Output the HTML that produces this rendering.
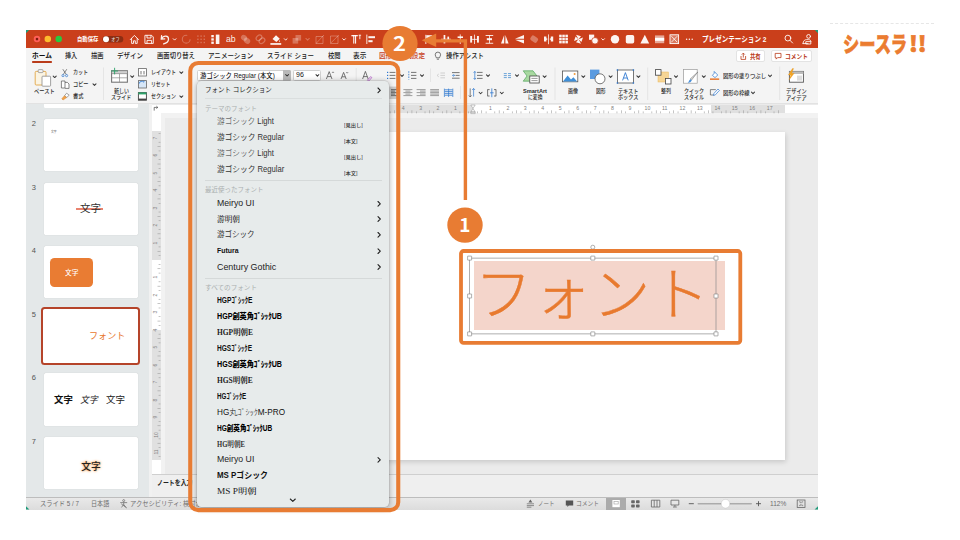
<!DOCTYPE html>
<html lang="ja"><head><meta charset="utf-8"><title>フォント</title>
<style>
html,body{margin:0;padding:0;background:#fff;}
body{width:960px;height:540px;position:relative;overflow:hidden;font-family:"Liberation Sans","Noto Sans CJK JP",sans-serif;}
.a{position:absolute;}
.t{position:absolute;white-space:nowrap;transform-origin:0 50%;}
svg{position:absolute;left:0;top:0;overflow:visible;}
</style></head><body>
<div class="a" style="left:26.00px;top:30.00px;width:792.00px;height:479.60px;background:#EDEDED;"></div>
<div class="a" style="left:26.00px;top:30.00px;width:792.00px;height:17.60px;background:#CA3F1B;"></div>
<div class="a" style="left:26.00px;top:47.60px;width:792.00px;height:56.60px;background:#F4F4F4;border-bottom:1px solid #E2E2E2;box-sizing:border-box;"></div>
<div class="a" style="left:26.00px;top:104.20px;width:123.30px;height:393.00px;background:#E4E8E9;"></div>
<div class="a" style="left:149.30px;top:104.20px;width:2.70px;height:393.00px;background:#F1F1F1;"></div>
<div class="a" style="left:152.00px;top:104.20px;width:666.00px;height:369.80px;background:#EBEBEB;"></div>
<div class="a" style="left:160.50px;top:113.30px;width:657.50px;height:4.70px;background:#F2F2F2;"></div>
<div class="a" style="left:160.50px;top:113.30px;width:4.10px;height:360.70px;background:#F2F2F2;"></div>
<div class="a" style="left:200.00px;top:131.60px;width:585.00px;height:328.40px;background:#fff;box-shadow:1px 2px 5px rgba(0,0,0,.15);"></div>
<div class="a" style="left:152.00px;top:104.60px;width:666.00px;height:8.70px;background:#fff;"></div>
<div class="a" style="left:200.00px;top:104.60px;width:273.00px;height:8.70px;background:#E0E0E0;"></div>
<div class="a" style="left:710.50px;top:104.60px;width:74.50px;height:8.70px;background:#E0E0E0;"></div>
<div class="a" style="left:152.00px;top:104.60px;width:8.50px;height:369.40px;background:#fff;"></div>
<div class="a" style="left:152.00px;top:131.00px;width:8.50px;height:129.00px;background:#E0E0E0;"></div>
<div class="a" style="left:152.00px;top:330.00px;width:8.50px;height:130.00px;background:#E0E0E0;"></div>
<div class="a" style="left:152.00px;top:474.00px;width:666.00px;height:23.20px;background:#EFEFEF;border-top:0.7px solid #CFCFCF;box-sizing:border-box;"></div>
<div class="a" style="left:26.00px;top:497.20px;width:792.00px;height:12.40px;background:linear-gradient(#E9E9E9,#DCDCDC);border-top:0.7px solid #BDBDBD;box-sizing:border-box;"></div>
<div class="a" style="left:606.00px;top:498.00px;width:19.60px;height:11.60px;background:#ABABAB;"></div>
<div class="a" style="left:43.80px;top:104.20px;width:94.50px;height:3.40px;background:#fff;border-radius:0 0 1.5px 1.5px;"></div>
<div class="a" style="left:43.80px;top:118.75px;width:94.50px;height:52.70px;background:#fff;border-radius:1.5px;box-shadow:0 0 0.8px rgba(0,0,0,.25);"></div>
<div class="a" style="left:43.80px;top:182.50px;width:94.50px;height:52.70px;background:#fff;border-radius:1.5px;box-shadow:0 0 0.8px rgba(0,0,0,.25);"></div>
<div class="a" style="left:43.80px;top:245.60px;width:94.50px;height:52.70px;background:#fff;border-radius:1.5px;box-shadow:0 0 0.8px rgba(0,0,0,.25);"></div>
<div class="a" style="left:41.30px;top:307.40px;width:99.00px;height:57.20px;background:#fff;border:2.1px solid #B5442A;border-radius:3.5px;box-sizing:border-box;"></div>
<div class="a" style="left:43.80px;top:373.00px;width:94.50px;height:52.70px;background:#fff;border-radius:1.5px;box-shadow:0 0 0.8px rgba(0,0,0,.25);"></div>
<div class="a" style="left:43.80px;top:436.80px;width:94.50px;height:52.70px;background:#fff;border-radius:1.5px;box-shadow:0 0 0.8px rgba(0,0,0,.25);"></div>
<div class="a" style="left:76.00px;top:208.30px;width:26.60px;height:1.70px;background:#E9836F;"></div>
<div class="a" style="left:50.00px;top:258.00px;width:43.00px;height:29.00px;background:#E97C33;border-radius:4.5px;"></div>
<div class="a" style="left:32.00px;top:61.40px;width:20.20px;height:1.60px;background:#B93B1A;border-radius:0.8px;"></div>
<div class="a" style="left:735.50px;top:50.40px;width:29.00px;height:12.00px;background:#fff;border:0.6px solid #E3E3E3;border-radius:2px;box-sizing:border-box;"></div>
<div class="a" style="left:770.70px;top:50.40px;width:41.80px;height:12.00px;background:#fff;border:0.6px solid #E3E3E3;border-radius:2px;box-sizing:border-box;"></div>
<div class="a" style="left:196.50px;top:69.60px;width:94.50px;height:11.20px;background:#fff;border:0.5px solid #D0D0D0;border-radius:1.5px;box-sizing:border-box;"></div>
<div class="a" style="left:283.30px;top:69.60px;width:7.70px;height:11.20px;background:#B9B9B9;border-radius:0 1.5px 1.5px 0;"></div>
<div class="a" style="left:292.80px;top:69.60px;width:28.20px;height:11.20px;background:#fff;border:0.5px solid #D0D0D0;border-radius:1.5px;box-sizing:border-box;"></div>
<div class="a" style="left:474.00px;top:261.00px;width:251.00px;height:69.30px;background:#F4D5CB;"></div>
<svg width="960" height="540" viewBox="0 0 960 540"><path d="M26 30 h3.2 l-3.2 3.2z M818 30 h-3.2 l3.2 3.2z M26 509.6 h3.4 l-3.4 -3.4z M818 509.6 h-3.4 l3.4 -3.4z" fill="#1F9C7A"/><circle cx="37" cy="39.1" r="3.25" fill="#FF5F57"/><circle cx="37" cy="39.1" r="1.3" fill="#7E1B10"/><circle cx="47.8" cy="39.1" r="3.25" fill="#FEBC2E"/><circle cx="58.7" cy="39.1" r="3.25" fill="#28C840"/><rect x="102.5" y="35.9" width="20.8" height="6.6" rx="3.3" fill="#8C2D13"/><circle cx="106" cy="39.2" r="3" fill="#fff"/><g fill="none" stroke="rgba(255,255,255,.93)" stroke-width="0.95" stroke-linecap="round" stroke-linejoin="round"><path d="M130.3 39.6 L134.4 35.4 L138.5 39.6 M131.6 38.6 V43.4 H133.5 V40.8 H135.3 V43.4 H137.2 V38.6"/><path d="M145.3 35.3 H151.6 L153.3 37 V43.4 H145.3 Z M147 35.5 V38 H151 V35.5 M147 43.2 V40.4 H151.6 V43.2"/><path d="M161.6 35.6 L161.2 39.2 L164.8 38.8 M161.6 38.8 C163.4 35 168.8 35.4 168.5 39.4 C168.3 42 166 43.4 163.6 43.9" stroke-width="1.25"/><path d="M173.2 38.7 l1.4 1.4 l1.4 -1.4"/><path d="M284.3 38.7 l1.4 1.4 l1.4 -1.4"/><path d="M342.7 38.7 l1.4 1.4 l1.4 -1.4"/><path d="M601.7 38.7 l1.4 1.4 l1.4 -1.4"/><circle cx="787.9" cy="38.1" r="2.9"/><path d="M790 40.3 L792.6 43"/><circle cx="808.6" cy="36.4" r="1.9"/><path d="M803 43.6 C803 40.6 805 39.6 806.6 39.6 H808.4 C810 39.6 811 40.4 811 41.6 M803 43.6 H808 M806.2 41.6 h4.6 v2.4 h-4.6z" stroke-width="0.9"/></g><circle cx="186.2" cy="39.2" r="3.9" fill="none" stroke="rgba(255,255,255,.27)" stroke-width="1.1" stroke-dasharray="19 5"/><rect x="197.2" y="35.4" width="1.4" height="1.4" fill="rgba(255,255,255,.27)"/><rect x="197.2" y="38.6" width="1.4" height="1.4" fill="rgba(255,255,255,.27)"/><rect x="197.2" y="41.8" width="1.4" height="1.4" fill="rgba(255,255,255,.27)"/><rect x="200.4" y="35.4" width="1.4" height="1.4" fill="rgba(255,255,255,.27)"/><rect x="200.4" y="38.6" width="1.4" height="1.4" fill="rgba(255,255,255,.27)"/><rect x="200.4" y="41.8" width="1.4" height="1.4" fill="rgba(255,255,255,.27)"/><rect x="203.6" y="35.4" width="1.4" height="1.4" fill="rgba(255,255,255,.27)"/><rect x="203.6" y="38.6" width="1.4" height="1.4" fill="rgba(255,255,255,.27)"/><rect x="203.6" y="41.8" width="1.4" height="1.4" fill="rgba(255,255,255,.27)"/><ellipse cx="244" cy="37.8" rx="3.2" ry="2.7" fill="rgba(255,255,255,.27)" transform="rotate(35 244 37.8)"/><ellipse cx="247" cy="40.8" rx="3.4" ry="2.8" fill="rgba(255,255,255,.27)" transform="rotate(35 247 40.8)"/><ellipse cx="259" cy="37.8" rx="3.2" ry="2.3" fill="none" stroke="rgba(255,255,255,.27)" stroke-width="1.2" transform="rotate(-40 259 37.8)"/><ellipse cx="262" cy="40.8" rx="3.2" ry="2.3" fill="none" stroke="rgba(255,255,255,.27)" stroke-width="1.2" transform="rotate(-40 262 40.8)"/><rect x="295.5" y="35" width="5.6" height="5.6" fill="rgba(255,255,255,.27)"/><rect x="292.6" y="38" width="5.6" height="5.6" fill="rgba(255,255,255,.27)"/><path d="M305.90 38.45 l1.70 1.70 l1.70 -1.70" fill="none" stroke="rgba(255,255,255,.27)" stroke-width="1.05" stroke-linecap="round" stroke-linejoin="round"/><path d="M316 36.5 H323 V43.5 H316 Z M316 43.5 L324 35" fill="none" stroke="rgba(255,255,255,.27)" stroke-width="1"/><path d="M330.5 36 H338 V43.5 H330.5 Z M331 42.8 L339 35" fill="none" stroke="rgba(255,255,255,.27)" stroke-width="1"/><rect x="530.4" y="36.4" width="7.6" height="5.4" rx="1.8" fill="rgba(255,255,255,.32)" transform="rotate(35 534.2 39.1)"/><g fill="rgba(255,255,255,.94)"><rect x="215.8" y="34.6" width="3.6" height="9.4"/><rect x="211.3" y="35" width="2.5" height="2.3"/><rect x="211.3" y="38.3" width="2.5" height="2.3"/><rect x="211.3" y="41.6" width="2.5" height="2.3"/><path d="M272.5 39 L276 35.2 L279.8 38.8 L276.4 42 Z M279.6 40 q1 1.6 0 2.3 q-1 -0.7 0 -2.3z"/><rect x="270.4" y="43.1" width="10.8" height="1.7"/><rect x="351.4" y="35" width="6.4" height="1.3"/><rect x="353.2" y="35" width="1.1" height="8.6"/><rect x="355" y="35" width="1.1" height="8.6"/><rect x="359.4" y="34.8" width="0.9" height="4.4"/><rect x="358.6" y="34.8" width="2.5" height="0.8"/><rect x="366.4" y="34.6" width="0.9" height="9.4"/><rect x="368.4" y="36.2" width="6.6" height="2"/><rect x="368.4" y="40.2" width="4.2" height="2"/><rect x="425.4" y="34.8" width="0.9" height="9.2"/><rect x="426.3" y="35.2" width="6" height="4.4"/><rect x="441" y="38.8" width="10" height="0.8"/><rect x="443.6" y="35" width="1.7" height="8.4"/><rect x="447.4" y="36.6" width="1.7" height="5.4"/><rect x="459.8" y="34.4" width="0.8" height="9.6"/><rect x="457.6" y="36.4" width="5.4" height="1.6"/><rect x="458.4" y="40.2" width="3.8" height="1.6"/><rect x="470.2" y="36" width="1.9" height="6.6"/><rect x="474.2" y="34.6" width="0.8" height="9.4"/><rect x="477" y="36" width="1.9" height="6.6"/><rect x="472" y="38.9" width="5" height="0.8"/><rect x="485.6" y="35" width="7.6" height="0.9"/><rect x="485.6" y="42.8" width="7.6" height="0.9"/><rect x="486.8" y="38.2" width="5.2" height="2"/><rect x="489" y="35.5" width="0.8" height="7.6"/><path d="M504.2 35 L501 43.6 H504.2 Z M505.4 35 L508.6 43.6 H505.4 Z"/><path d="M515 38.8 L524 35 V38.8 Z M515 39.8 L524 43.4 V39.8 Z" /><rect x="548.2" y="34.4" width="0.8" height="9.8"/><path d="M544 36.6 h2.4 v1.6 l1.4 0.9 -1.4 0.9 v1.6 h-2.4z M553.2 36.6 h-2.4 v1.6 l-1.4 0.9 1.4 0.9 v1.6 h2.4z"/><rect x="559.20" y="34.70" width="2.5" height="2.5"/><rect x="559.20" y="37.80" width="2.5" height="2.5"/><rect x="559.20" y="40.90" width="2.5" height="2.5"/><rect x="562.30" y="34.70" width="2.5" height="2.5"/><rect x="562.30" y="37.80" width="2.5" height="2.5"/><rect x="562.30" y="40.90" width="2.5" height="2.5"/><rect x="565.40" y="34.70" width="2.5" height="2.5"/><rect x="565.40" y="37.80" width="2.5" height="2.5"/><rect x="565.40" y="40.90" width="2.5" height="2.5"/><path d="M578.5 39.2 L576 34.8 L581 36.2 Z M578.5 39.2 L583 37.4 L581.4 42 Z M578.5 39.2 L581 43.8 L576 42.2 Z M578.5 39.2 L574 41 L575.6 36.4 Z"/><rect x="589" y="34.6" width="5.2" height="5.2"/><circle cx="595" cy="40.8" r="3.3" stroke="#CA3F1B" stroke-width="0.8"/><circle cx="615" cy="39.2" r="4.2"/><rect x="625.8" y="35" width="8.4" height="8.4" rx="1.7"/><path d="M644.8 34.8 L649.2 43.5 H640.4 Z"/><circle cx="686.6" cy="39.3" r="0.75"/><circle cx="689.4" cy="39.3" r="0.75"/><circle cx="692.2" cy="39.3" r="0.75"/></g><rect x="655" y="35.4" width="9.2" height="7.8" fill="rgba(255,255,255,.55)"/><rect x="655" y="37.8" width="9.2" height="3" fill="#fff"/><rect x="670" y="34.8" width="8.6" height="8.8" fill="rgba(255,255,255,.3)" stroke="#fff" stroke-width="0.9"/><path d="M671.4 36.2 L677.2 42.2 M677.2 36.2 L671.4 42.2" stroke="#fff" stroke-width="0.8"/><path d="M435.2 54.8 a2.7 2.7 0 1 1 5.4 0 c0 1.3 -1 1.7 -1.1 3 h-3.2 c-0.1 -1.3 -1.1 -1.7 -1.1 -3z M436.8 59.2 h2.2" fill="none" stroke="#444" stroke-width="0.7"/><path d="M741 56 v3.4 h4.6 v-3.4 M743.3 57.6 v-4.4 M741.8 54.6 l1.5 -1.5 l1.5 1.5" fill="none" stroke="#B93B1A" stroke-width="0.8"/><path d="M775.2 53.4 h5.8 v4.2 h-3.4 l-1.4 1.5 v-1.5 h-1z" fill="none" stroke="#B93B1A" stroke-width="0.8" stroke-linejoin="round"/><rect x="35.2" y="71.4" width="10.8" height="13.6" rx="1" fill="#FBF4E3" stroke="#E2A646" stroke-width="0.9"/><rect x="38.2" y="69.6" width="4.8" height="3" rx="0.8" fill="#F4F4F4" stroke="#8A8A8A" stroke-width="0.7"/><rect x="42" y="76.2" width="8.6" height="10" rx="0.8" fill="#fff" stroke="#8A8A8A" stroke-width="0.8"/><path d="M53.20 76.05 l1.50 1.50 l1.50 -1.50" fill="none" stroke="#3a3a3a" stroke-width="1.05" stroke-linecap="round" stroke-linejoin="round"/><path d="M62.8 69.2 L66.4 74.6 M66.8 69.2 L63.2 74.6" stroke="#555" stroke-width="0.7" fill="none"/><circle cx="63" cy="75.6" r="1.1" fill="none" stroke="#2F78D0" stroke-width="0.7"/><circle cx="66.6" cy="75.6" r="1.1" fill="none" stroke="#2F78D0" stroke-width="0.7"/><path d="M61.4 81 h3.6 v7 h-3.6z M65 82.4 h2.4 l1.6 1.6 v4.4 h-4" fill="#fff" stroke="#555" stroke-width="0.7"/><path d="M93.00 83.85 l1.50 1.50 l1.50 -1.50" fill="none" stroke="#3a3a3a" stroke-width="1.05" stroke-linecap="round" stroke-linejoin="round"/><path d="M66.6 93.2 l2.6 2 l-2.4 2.2 l-2.2 -1.8z" fill="#fff" stroke="#666" stroke-width="0.6"/><path d="M64.4 95.8 l2.2 1.8 l-3.6 2.4 l-1.2 -1.2z" fill="#F0A24A" stroke="#D8842C" stroke-width="0.5"/><rect x="103.0" y="67.5" width="0.6" height="32.5" fill="#DADADA"/><rect x="355.8" y="68.0" width="0.6" height="14.0" fill="#DADADA"/><rect x="430.0" y="68.5" width="0.6" height="13.5" fill="#DADADA"/><rect x="460.0" y="86.0" width="0.6" height="13.0" fill="#DADADA"/><rect x="554.7" y="67.5" width="0.6" height="32.5" fill="#DADADA"/><rect x="647.5" y="67.5" width="0.6" height="32.5" fill="#DADADA"/><rect x="779.5" y="66.5" width="0.6" height="33.5" fill="#DADADA"/><rect x="111.6" y="70.8" width="15.8" height="11.4" fill="#fff" stroke="#777" stroke-width="1.1"/><rect x="111.6" y="70.8" width="15.8" height="3" fill="#CFCFCF" stroke="#777" stroke-width="0.6"/><path d="M119.5 73.8 V82.2 M111.6 77.8 H127.4" stroke="#8A8A8A" stroke-width="0.7"/><path d="M114.6 67.8 V74.4 M111.2 71 H118" stroke="#2DA36A" stroke-width="0.9"/><path d="M130.70 75.85 l1.50 1.50 l1.50 -1.50" fill="none" stroke="#3a3a3a" stroke-width="1.05" stroke-linecap="round" stroke-linejoin="round"/><rect x="138.4" y="68.6" width="8" height="7.4" fill="#fff" stroke="#666" stroke-width="0.8"/><rect x="140" y="71" width="2" height="3.4" fill="#BBB"/><rect x="143" y="71" width="2" height="3.4" fill="#BBB"/><rect x="138.4" y="80.6" width="8" height="7.4" fill="#D6E6F7" stroke="#666" stroke-width="0.8"/><path d="M139.2 83.6 a2.6 2.6 0 0 1 4.6 -1.4 l0.2 -1.4" fill="none" stroke="#2F78D0" stroke-width="0.8"/><rect x="138.4" y="92.6" width="8" height="7.6" fill="#fff" stroke="#444" stroke-width="0.9"/><rect x="138.4" y="92.4" width="8" height="2" fill="#2DA36A"/><rect x="138.4" y="98.6" width="8" height="1.6" fill="#444"/><path d="M179.80 71.85 l1.50 1.50 l1.50 -1.50" fill="none" stroke="#3a3a3a" stroke-width="1.05" stroke-linecap="round" stroke-linejoin="round"/><path d="M179.80 95.95 l1.50 1.50 l1.50 -1.50" fill="none" stroke="#3a3a3a" stroke-width="1.05" stroke-linecap="round" stroke-linejoin="round"/><path d="M285.70 74.60 l1.40 1.40 l1.40 -1.40" fill="none" stroke="#333" stroke-width="1.05" stroke-linecap="round" stroke-linejoin="round"/><path d="M316.00 74.70 l1.40 1.40 l1.40 -1.40" fill="none" stroke="#333" stroke-width="1.05" stroke-linecap="round" stroke-linejoin="round"/><path d="M389.6 72.4 H395.4" stroke="#555" stroke-width="0.8"/><path d="M389.6 75.4 H395.4" stroke="#555" stroke-width="0.8"/><path d="M389.6 78.4 H395.4" stroke="#555" stroke-width="0.8"/><rect x="387" y="71.8" width="1.2" height="1.2" fill="#2F78D0"/><rect x="387" y="74.8" width="1.2" height="1.2" fill="#2F78D0"/><rect x="387" y="77.8" width="1.2" height="1.2" fill="#2F78D0"/><path d="M400.50 74.85 l1.50 1.50 l1.50 -1.50" fill="none" stroke="#3a3a3a" stroke-width="1.05" stroke-linecap="round" stroke-linejoin="round"/><path d="M411.0 72.4 H416.4" stroke="#555" stroke-width="0.8"/><path d="M411.0 75.4 H416.4" stroke="#555" stroke-width="0.8"/><path d="M411.0 78.4 H416.4" stroke="#555" stroke-width="0.8"/><path d="M408.8 71.2 V79.6" stroke="#2F78D0" stroke-width="0.8" stroke-dasharray="1.6 1"/><path d="M420.50 74.85 l1.50 1.50 l1.50 -1.50" fill="none" stroke="#3a3a3a" stroke-width="1.05" stroke-linecap="round" stroke-linejoin="round"/><path d="M440.4 73.0 H445.0" stroke="#C6C6C6" stroke-width="0.8"/><path d="M440.4 75.4 H445.0" stroke="#C6C6C6" stroke-width="0.8"/><path d="M440.4 77.8 H445.0" stroke="#C6C6C6" stroke-width="0.8"/><path d="M438.8 74 l-1.8 1.4 l1.8 1.4" fill="none" stroke="#C6C6C6" stroke-width="0.7"/><path d="M452.0 72.6 H459.6" stroke="#555" stroke-width="0.8"/><path d="M452.0 78.2 H459.6" stroke="#555" stroke-width="0.8"/><path d="M455.6 75.4 H459.6" stroke="#555" stroke-width="0.8"/><path d="M452 75.4 h2.6 m-1.2 -1.2 l1.2 1.2 l-1.2 1.2" fill="none" stroke="#2F78D0" stroke-width="0.7"/><path d="M477.0 72.4 H482.6" stroke="#555" stroke-width="0.8"/><path d="M477.0 75.4 H482.6" stroke="#555" stroke-width="0.8"/><path d="M477.0 78.4 H482.6" stroke="#555" stroke-width="0.8"/><path d="M474.8 71.4 V79.4 M473.6 72.8 l1.2 -1.4 l1.2 1.4 M473.6 78 l1.2 1.4 l1.2 -1.4" fill="none" stroke="#2F78D0" stroke-width="0.7"/><path d="M486.50 74.85 l1.50 1.50 l1.50 -1.50" fill="none" stroke="#3a3a3a" stroke-width="1.05" stroke-linecap="round" stroke-linejoin="round"/><path d="M503.8 73.6 H506.8" stroke="#5B9BD5" stroke-width="0.9"/><path d="M503.8 75.6 H506.8" stroke="#5B9BD5" stroke-width="0.9"/><path d="M503.8 77.6 H506.8" stroke="#5B9BD5" stroke-width="0.9"/><path d="M508.0 73.6 H511.0" stroke="#5B9BD5" stroke-width="0.9"/><path d="M508.0 75.6 H511.0" stroke="#5B9BD5" stroke-width="0.9"/><path d="M508.0 77.6 H511.0" stroke="#5B9BD5" stroke-width="0.9"/><path d="M515.50 74.85 l1.50 1.50 l1.50 -1.50" fill="none" stroke="#3a3a3a" stroke-width="1.05" stroke-linecap="round" stroke-linejoin="round"/><rect x="389.4" y="86.6" width="9.8" height="12.4" fill="#C9C9C9"/><path d="M391.0 89.6 H397.4" stroke="#555" stroke-width="0.8"/><path d="M391.0 92.6 H397.4" stroke="#555" stroke-width="0.8"/><path d="M391.0 95.6 H397.4" stroke="#555" stroke-width="0.8"/><path d="M391.0 91.1 H395.0" stroke="#555" stroke-width="0.8"/><path d="M391.0 94.1 H395.0" stroke="#555" stroke-width="0.8"/><path d="M403.4 89.6 H412.4" stroke="#777" stroke-width="0.7"/><path d="M403.4 92.6 H412.4" stroke="#777" stroke-width="0.7"/><path d="M403.4 95.6 H412.4" stroke="#777" stroke-width="0.7"/><path d="M405.4 91.1 H410.4" stroke="#777" stroke-width="0.7"/><path d="M405.4 94.1 H410.4" stroke="#777" stroke-width="0.7"/><path d="M416.6 89.6 H425.6" stroke="#777" stroke-width="0.7"/><path d="M416.6 92.6 H425.6" stroke="#777" stroke-width="0.7"/><path d="M416.6 95.6 H425.6" stroke="#777" stroke-width="0.7"/><path d="M420.0 91.1 H425.6" stroke="#777" stroke-width="0.7"/><path d="M420.0 94.1 H425.6" stroke="#777" stroke-width="0.7"/><path d="M430.2 89.6 H439.0" stroke="#777" stroke-width="0.7"/><path d="M430.2 91.1 H439.0" stroke="#777" stroke-width="0.7"/><path d="M430.2 92.6 H439.0" stroke="#777" stroke-width="0.7"/><path d="M430.2 94.1 H439.0" stroke="#777" stroke-width="0.7"/><path d="M430.2 95.6 H439.0" stroke="#777" stroke-width="0.7"/><path d="M444.6 89.8 H452.6" stroke="#2F78D0" stroke-width="0.8"/><path d="M444.6 91.6 H452.6" stroke="#2F78D0" stroke-width="0.8"/><path d="M444.6 93.4 H452.6" stroke="#2F78D0" stroke-width="0.8"/><path d="M444.6 95.2 H452.6" stroke="#2F78D0" stroke-width="0.8"/><path d="M444.4 88.6 V97 M448.6 88.6 V97 M452.8 88.6 V97" stroke="#2F78D0" stroke-width="0.7"/><path d="M470.2 88.4 V97 M468.8 95.4 l1.4 1.6 l1.4 -1.6" fill="none" stroke="#555" stroke-width="0.7"/><path d="M473.6 88.6 V96.6 M472.2 90 l1.4 -1.6 l1.4 1.6" fill="none" stroke="#2F78D0" stroke-width="0.7"/><path d="M479.10 92.25 l1.50 1.50 l1.50 -1.50" fill="none" stroke="#3a3a3a" stroke-width="1.05" stroke-linecap="round" stroke-linejoin="round"/><path d="M487.6 89.4 v6.8 M496 89.4 v6.8 M487.6 89.6 h2 M487.6 96 h2 M496 89.6 h-2 M496 96 h-2" fill="none" stroke="#555" stroke-width="0.8"/><path d="M491.8 88.4 V97.2 M490 92.8 h3.6" stroke="#2F78D0" stroke-width="0.8"/><path d="M500.30 92.25 l1.50 1.50 l1.50 -1.50" fill="none" stroke="#3a3a3a" stroke-width="1.05" stroke-linecap="round" stroke-linejoin="round"/><path d="M326.4 79 L329.2 71.6 L332 79 M327.4 76.6 H331" fill="none" stroke="#555" stroke-width="0.8"/><path d="M332 73 l1 -1.2 l1 1.2" fill="none" stroke="#555" stroke-width="0.6"/><path d="M341 79 L343.6 72.4 L346.2 79 M342 76.8 H345.2" fill="none" stroke="#555" stroke-width="0.8"/><path d="M346.2 72 l1 1.2 l1 -1.2" fill="none" stroke="#555" stroke-width="0.6"/><path d="M362.6 79 L365.4 71.4 L368.2 79 M363.6 76.6 H367.2" fill="none" stroke="#555" stroke-width="0.8"/><path d="M367.4 80.2 l3.2 -3.6 l1.2 1 l-3 3.4z" fill="#F3E4F7" stroke="#A23CB8" stroke-width="0.6"/><path d="M523.2 70.8 H533 L537 76 L533 81.2 H523.2 L527 76 Z" fill="#A8D8A0" stroke="#3C9B4A" stroke-width="0.6"/><rect x="529.8" y="76" width="9.4" height="7" fill="#fff" stroke="#444" stroke-width="0.8"/><path d="M531.4 78.4 h6.2 M531.4 80.6 h6.2" stroke="#555" stroke-width="0.6"/><path d="M543.10 75.85 l1.50 1.50 l1.50 -1.50" fill="none" stroke="#3a3a3a" stroke-width="1.05" stroke-linecap="round" stroke-linejoin="round"/><rect x="562.4" y="71" width="15.4" height="10.8" fill="#fff" stroke="#555" stroke-width="0.8"/><path d="M563 81.4 L567.6 75.6 L571 79.4 L573.4 77.2 L577.2 81.4 Z" fill="#3F8FD8"/><circle cx="574.6" cy="74" r="1" fill="#F09A3A"/><path d="M581.80 75.85 l1.50 1.50 l1.50 -1.50" fill="none" stroke="#3a3a3a" stroke-width="1.05" stroke-linecap="round" stroke-linejoin="round"/><rect x="590" y="69.6" width="9.4" height="9.4" fill="#5B9BE0"/><circle cx="600" cy="78.8" r="5" fill="#fff" stroke="#555" stroke-width="0.8"/><path d="M609.10 75.85 l1.50 1.50 l1.50 -1.50" fill="none" stroke="#3a3a3a" stroke-width="1.05" stroke-linecap="round" stroke-linejoin="round"/><rect x="617.4" y="70" width="16" height="13" fill="#fff" stroke="#555" stroke-width="0.8"/><path d="M622.6 80.4 L625.4 72.6 L628.2 80.4 M623.6 78 H627.2" fill="none" stroke="#2F78D0" stroke-width="0.9"/><rect x="616.7" y="69.3" width="1.4" height="1.4" fill="#2F78D0"/><rect x="632.7" y="69.3" width="1.4" height="1.4" fill="#2F78D0"/><rect x="616.7" y="82.3" width="1.4" height="1.4" fill="#2F78D0"/><rect x="632.7" y="82.3" width="1.4" height="1.4" fill="#2F78D0"/><path d="M636.90 75.85 l1.50 1.50 l1.50 -1.50" fill="none" stroke="#3a3a3a" stroke-width="1.05" stroke-linecap="round" stroke-linejoin="round"/><rect x="658" y="72" width="10.4" height="10" fill="#F6D595" stroke="#E9B95C" stroke-width="0.5"/><rect x="655.4" y="69.6" width="5.6" height="5.6" fill="#fff" stroke="#444" stroke-width="0.8"/><rect x="665.4" y="78.4" width="5.6" height="5.6" fill="#fff" stroke="#444" stroke-width="0.8"/><path d="M674.50 75.85 l1.50 1.50 l1.50 -1.50" fill="none" stroke="#3a3a3a" stroke-width="1.05" stroke-linecap="round" stroke-linejoin="round"/><rect x="683.6" y="69.6" width="13.6" height="13.6" fill="#fff" stroke="#9A9A9A" stroke-width="0.7"/><path d="M697.8 72 L691.6 80 l-1.4 -1 z" fill="#DDD" stroke="#666" stroke-width="0.5"/><path d="M690.4 79.2 l1.4 1 c-0.6 2 -2.6 2.6 -4.2 2.4 c1.6 -0.8 1.2 -2.6 2.8 -3.4z" fill="#4A90D9"/><path d="M702.30 75.85 l1.50 1.50 l1.50 -1.50" fill="none" stroke="#3a3a3a" stroke-width="1.05" stroke-linecap="round" stroke-linejoin="round"/><path d="M712.4 75.4 l2.6 -3 l2.8 2.6 l-2.8 2.6z M714.2 71 v2" fill="#fff" stroke="#2F78D0" stroke-width="0.7"/><rect x="710" y="78.4" width="9.2" height="1.5" fill="#E8772E"/><path d="M710.4 89.6 h5.4 M710.4 89.6 v5.4 h4" fill="none" stroke="#555" stroke-width="0.7"/><path d="M713.4 95.4 l0.6 -2 l4 -4.4 l1.4 1.4 l-4 4.4z" fill="#fff" stroke="#2F78D0" stroke-width="0.7"/><path d="M768.50 75.15 l1.50 1.50 l1.50 -1.50" fill="none" stroke="#3a3a3a" stroke-width="1.05" stroke-linecap="round" stroke-linejoin="round"/><path d="M751.50 92.15 l1.50 1.50 l1.50 -1.50" fill="none" stroke="#3a3a3a" stroke-width="1.05" stroke-linecap="round" stroke-linejoin="round"/><rect x="789.4" y="71.4" width="14" height="10.8" fill="#fff" stroke="#555" stroke-width="0.9"/><rect x="789.4" y="71.4" width="14" height="2.6" fill="#BDBDBD"/><rect x="797" y="75.6" width="5" height="5" fill="#DDD"/><path d="M792.4 68.6 L788.4 75 h2.4 l-1.6 4.8 l5 -6.6 h-2.6 l2 -4.6z" fill="#F5A623" stroke="#E08A12" stroke-width="0.3"/><rect x="215.31" y="111.40" width="0.6" height="1.90" fill="#9E9E9E"/><rect x="219.68" y="110.30" width="0.6" height="3.00" fill="#9E9E9E"/><rect x="224.04" y="111.40" width="0.6" height="1.90" fill="#9E9E9E"/><rect x="232.76" y="111.40" width="0.6" height="1.90" fill="#9E9E9E"/><rect x="237.12" y="110.30" width="0.6" height="3.00" fill="#9E9E9E"/><rect x="241.49" y="111.40" width="0.6" height="1.90" fill="#9E9E9E"/><rect x="250.21" y="111.40" width="0.6" height="1.90" fill="#9E9E9E"/><rect x="254.57" y="110.30" width="0.6" height="3.00" fill="#9E9E9E"/><rect x="258.94" y="111.40" width="0.6" height="1.90" fill="#9E9E9E"/><rect x="267.66" y="111.40" width="0.6" height="1.90" fill="#9E9E9E"/><rect x="272.03" y="110.30" width="0.6" height="3.00" fill="#9E9E9E"/><rect x="276.39" y="111.40" width="0.6" height="1.90" fill="#9E9E9E"/><rect x="285.11" y="111.40" width="0.6" height="1.90" fill="#9E9E9E"/><rect x="289.47" y="110.30" width="0.6" height="3.00" fill="#9E9E9E"/><rect x="293.84" y="111.40" width="0.6" height="1.90" fill="#9E9E9E"/><rect x="302.56" y="111.40" width="0.6" height="1.90" fill="#9E9E9E"/><rect x="306.93" y="110.30" width="0.6" height="3.00" fill="#9E9E9E"/><rect x="311.29" y="111.40" width="0.6" height="1.90" fill="#9E9E9E"/><rect x="320.01" y="111.40" width="0.6" height="1.90" fill="#9E9E9E"/><rect x="324.38" y="110.30" width="0.6" height="3.00" fill="#9E9E9E"/><rect x="328.74" y="111.40" width="0.6" height="1.90" fill="#9E9E9E"/><rect x="337.46" y="111.40" width="0.6" height="1.90" fill="#9E9E9E"/><rect x="341.82" y="110.30" width="0.6" height="3.00" fill="#9E9E9E"/><rect x="346.19" y="111.40" width="0.6" height="1.90" fill="#9E9E9E"/><rect x="354.91" y="111.40" width="0.6" height="1.90" fill="#9E9E9E"/><rect x="359.27" y="110.30" width="0.6" height="3.00" fill="#9E9E9E"/><rect x="363.64" y="111.40" width="0.6" height="1.90" fill="#9E9E9E"/><rect x="372.36" y="111.40" width="0.6" height="1.90" fill="#9E9E9E"/><rect x="376.72" y="110.30" width="0.6" height="3.00" fill="#9E9E9E"/><rect x="381.09" y="111.40" width="0.6" height="1.90" fill="#9E9E9E"/><rect x="389.81" y="111.40" width="0.6" height="1.90" fill="#9E9E9E"/><rect x="394.18" y="110.30" width="0.6" height="3.00" fill="#9E9E9E"/><rect x="398.54" y="111.40" width="0.6" height="1.90" fill="#9E9E9E"/><rect x="407.26" y="111.40" width="0.6" height="1.90" fill="#9E9E9E"/><rect x="411.62" y="110.30" width="0.6" height="3.00" fill="#9E9E9E"/><rect x="415.99" y="111.40" width="0.6" height="1.90" fill="#9E9E9E"/><rect x="424.71" y="111.40" width="0.6" height="1.90" fill="#9E9E9E"/><rect x="429.07" y="110.30" width="0.6" height="3.00" fill="#9E9E9E"/><rect x="433.44" y="111.40" width="0.6" height="1.90" fill="#9E9E9E"/><rect x="442.16" y="111.40" width="0.6" height="1.90" fill="#9E9E9E"/><rect x="446.52" y="110.30" width="0.6" height="3.00" fill="#9E9E9E"/><rect x="450.89" y="111.40" width="0.6" height="1.90" fill="#9E9E9E"/><rect x="459.61" y="111.40" width="0.6" height="1.90" fill="#9E9E9E"/><rect x="463.97" y="110.30" width="0.6" height="3.00" fill="#9E9E9E"/><rect x="468.34" y="111.40" width="0.6" height="1.90" fill="#9E9E9E"/><rect x="477.06" y="111.40" width="0.6" height="1.90" fill="#9E9E9E"/><rect x="481.43" y="110.30" width="0.6" height="3.00" fill="#9E9E9E"/><rect x="485.79" y="111.40" width="0.6" height="1.90" fill="#9E9E9E"/><rect x="494.51" y="111.40" width="0.6" height="1.90" fill="#9E9E9E"/><rect x="498.88" y="110.30" width="0.6" height="3.00" fill="#9E9E9E"/><rect x="503.24" y="111.40" width="0.6" height="1.90" fill="#9E9E9E"/><rect x="511.96" y="111.40" width="0.6" height="1.90" fill="#9E9E9E"/><rect x="516.33" y="110.30" width="0.6" height="3.00" fill="#9E9E9E"/><rect x="520.69" y="111.40" width="0.6" height="1.90" fill="#9E9E9E"/><rect x="529.41" y="111.40" width="0.6" height="1.90" fill="#9E9E9E"/><rect x="533.78" y="110.30" width="0.6" height="3.00" fill="#9E9E9E"/><rect x="538.14" y="111.40" width="0.6" height="1.90" fill="#9E9E9E"/><rect x="546.86" y="111.40" width="0.6" height="1.90" fill="#9E9E9E"/><rect x="551.23" y="110.30" width="0.6" height="3.00" fill="#9E9E9E"/><rect x="555.59" y="111.40" width="0.6" height="1.90" fill="#9E9E9E"/><rect x="564.31" y="111.40" width="0.6" height="1.90" fill="#9E9E9E"/><rect x="568.68" y="110.30" width="0.6" height="3.00" fill="#9E9E9E"/><rect x="573.04" y="111.40" width="0.6" height="1.90" fill="#9E9E9E"/><rect x="581.76" y="111.40" width="0.6" height="1.90" fill="#9E9E9E"/><rect x="586.12" y="110.30" width="0.6" height="3.00" fill="#9E9E9E"/><rect x="590.49" y="111.40" width="0.6" height="1.90" fill="#9E9E9E"/><rect x="599.21" y="111.40" width="0.6" height="1.90" fill="#9E9E9E"/><rect x="603.58" y="110.30" width="0.6" height="3.00" fill="#9E9E9E"/><rect x="607.94" y="111.40" width="0.6" height="1.90" fill="#9E9E9E"/><rect x="616.66" y="111.40" width="0.6" height="1.90" fill="#9E9E9E"/><rect x="621.03" y="110.30" width="0.6" height="3.00" fill="#9E9E9E"/><rect x="625.39" y="111.40" width="0.6" height="1.90" fill="#9E9E9E"/><rect x="634.11" y="111.40" width="0.6" height="1.90" fill="#9E9E9E"/><rect x="638.48" y="110.30" width="0.6" height="3.00" fill="#9E9E9E"/><rect x="642.84" y="111.40" width="0.6" height="1.90" fill="#9E9E9E"/><rect x="651.56" y="111.40" width="0.6" height="1.90" fill="#9E9E9E"/><rect x="655.93" y="110.30" width="0.6" height="3.00" fill="#9E9E9E"/><rect x="660.29" y="111.40" width="0.6" height="1.90" fill="#9E9E9E"/><rect x="669.01" y="111.40" width="0.6" height="1.90" fill="#9E9E9E"/><rect x="673.38" y="110.30" width="0.6" height="3.00" fill="#9E9E9E"/><rect x="677.74" y="111.40" width="0.6" height="1.90" fill="#9E9E9E"/><rect x="686.46" y="111.40" width="0.6" height="1.90" fill="#9E9E9E"/><rect x="690.83" y="110.30" width="0.6" height="3.00" fill="#9E9E9E"/><rect x="695.19" y="111.40" width="0.6" height="1.90" fill="#9E9E9E"/><rect x="703.91" y="111.40" width="0.6" height="1.90" fill="#9E9E9E"/><rect x="708.28" y="110.30" width="0.6" height="3.00" fill="#9E9E9E"/><rect x="712.64" y="111.40" width="0.6" height="1.90" fill="#9E9E9E"/><rect x="721.36" y="111.40" width="0.6" height="1.90" fill="#9E9E9E"/><rect x="725.73" y="110.30" width="0.6" height="3.00" fill="#9E9E9E"/><rect x="730.09" y="111.40" width="0.6" height="1.90" fill="#9E9E9E"/><rect x="738.81" y="111.40" width="0.6" height="1.90" fill="#9E9E9E"/><rect x="743.17" y="110.30" width="0.6" height="3.00" fill="#9E9E9E"/><rect x="747.54" y="111.40" width="0.6" height="1.90" fill="#9E9E9E"/><rect x="756.26" y="111.40" width="0.6" height="1.90" fill="#9E9E9E"/><rect x="760.62" y="110.30" width="0.6" height="3.00" fill="#9E9E9E"/><rect x="764.99" y="111.40" width="0.6" height="1.90" fill="#9E9E9E"/><rect x="773.71" y="111.40" width="0.6" height="1.90" fill="#9E9E9E"/><rect x="778.08" y="110.30" width="0.6" height="3.00" fill="#9E9E9E"/><rect x="158.60" y="133.19" width="1.90" height="0.6" fill="#9E9E9E"/><rect x="158.60" y="141.91" width="1.90" height="0.6" fill="#9E9E9E"/><rect x="157.50" y="146.27" width="3.00" height="0.6" fill="#9E9E9E"/><rect x="158.60" y="150.64" width="1.90" height="0.6" fill="#9E9E9E"/><rect x="158.60" y="159.36" width="1.90" height="0.6" fill="#9E9E9E"/><rect x="157.50" y="163.72" width="3.00" height="0.6" fill="#9E9E9E"/><rect x="158.60" y="168.09" width="1.90" height="0.6" fill="#9E9E9E"/><rect x="158.60" y="176.81" width="1.90" height="0.6" fill="#9E9E9E"/><rect x="157.50" y="181.18" width="3.00" height="0.6" fill="#9E9E9E"/><rect x="158.60" y="185.54" width="1.90" height="0.6" fill="#9E9E9E"/><rect x="158.60" y="194.26" width="1.90" height="0.6" fill="#9E9E9E"/><rect x="157.50" y="198.62" width="3.00" height="0.6" fill="#9E9E9E"/><rect x="158.60" y="202.99" width="1.90" height="0.6" fill="#9E9E9E"/><rect x="158.60" y="211.71" width="1.90" height="0.6" fill="#9E9E9E"/><rect x="157.50" y="216.07" width="3.00" height="0.6" fill="#9E9E9E"/><rect x="158.60" y="220.44" width="1.90" height="0.6" fill="#9E9E9E"/><rect x="158.60" y="229.16" width="1.90" height="0.6" fill="#9E9E9E"/><rect x="157.50" y="233.52" width="3.00" height="0.6" fill="#9E9E9E"/><rect x="158.60" y="237.89" width="1.90" height="0.6" fill="#9E9E9E"/><rect x="158.60" y="246.61" width="1.90" height="0.6" fill="#9E9E9E"/><rect x="157.50" y="250.97" width="3.00" height="0.6" fill="#9E9E9E"/><rect x="158.60" y="255.34" width="1.90" height="0.6" fill="#9E9E9E"/><rect x="158.60" y="264.06" width="1.90" height="0.6" fill="#9E9E9E"/><rect x="157.50" y="268.43" width="3.00" height="0.6" fill="#9E9E9E"/><rect x="158.60" y="272.79" width="1.90" height="0.6" fill="#9E9E9E"/><rect x="158.60" y="281.51" width="1.90" height="0.6" fill="#9E9E9E"/><rect x="157.50" y="285.88" width="3.00" height="0.6" fill="#9E9E9E"/><rect x="158.60" y="290.24" width="1.90" height="0.6" fill="#9E9E9E"/><rect x="158.60" y="298.96" width="1.90" height="0.6" fill="#9E9E9E"/><rect x="157.50" y="303.32" width="3.00" height="0.6" fill="#9E9E9E"/><rect x="158.60" y="307.69" width="1.90" height="0.6" fill="#9E9E9E"/><rect x="158.60" y="316.41" width="1.90" height="0.6" fill="#9E9E9E"/><rect x="157.50" y="320.77" width="3.00" height="0.6" fill="#9E9E9E"/><rect x="158.60" y="325.14" width="1.90" height="0.6" fill="#9E9E9E"/><rect x="158.60" y="333.86" width="1.90" height="0.6" fill="#9E9E9E"/><rect x="157.50" y="338.22" width="3.00" height="0.6" fill="#9E9E9E"/><rect x="158.60" y="342.59" width="1.90" height="0.6" fill="#9E9E9E"/><rect x="158.60" y="351.31" width="1.90" height="0.6" fill="#9E9E9E"/><rect x="157.50" y="355.68" width="3.00" height="0.6" fill="#9E9E9E"/><rect x="158.60" y="360.04" width="1.90" height="0.6" fill="#9E9E9E"/><rect x="158.60" y="368.76" width="1.90" height="0.6" fill="#9E9E9E"/><rect x="157.50" y="373.12" width="3.00" height="0.6" fill="#9E9E9E"/><rect x="158.60" y="377.49" width="1.90" height="0.6" fill="#9E9E9E"/><rect x="158.60" y="386.21" width="1.90" height="0.6" fill="#9E9E9E"/><rect x="157.50" y="390.57" width="3.00" height="0.6" fill="#9E9E9E"/><rect x="158.60" y="394.94" width="1.90" height="0.6" fill="#9E9E9E"/><rect x="158.60" y="403.66" width="1.90" height="0.6" fill="#9E9E9E"/><rect x="157.50" y="408.02" width="3.00" height="0.6" fill="#9E9E9E"/><rect x="158.60" y="412.39" width="1.90" height="0.6" fill="#9E9E9E"/><rect x="158.60" y="421.11" width="1.90" height="0.6" fill="#9E9E9E"/><rect x="157.50" y="425.47" width="3.00" height="0.6" fill="#9E9E9E"/><rect x="158.60" y="429.84" width="1.90" height="0.6" fill="#9E9E9E"/><rect x="158.60" y="438.56" width="1.90" height="0.6" fill="#9E9E9E"/><rect x="157.50" y="442.93" width="3.00" height="0.6" fill="#9E9E9E"/><rect x="158.60" y="447.29" width="1.90" height="0.6" fill="#9E9E9E"/><rect x="158.60" y="456.01" width="1.90" height="0.6" fill="#9E9E9E"/><path d="M470.8 105 h4.4 l-2.2 3.4z M470.8 112 h4.4 l-2.2 -3.4z M470.8 112 h4.4 v1.6 h-4.4z" fill="#fff" stroke="#8A8A8A" stroke-width="0.5"/><path d="M154.2 110.6 V107.4 H157.6 M156.4 106.2 l1.4 1.2 l-1.4 1.2" fill="none" stroke="#444" stroke-width="0.7"/><rect x="469.6" y="258.1" width="246.4" height="75.8" fill="none" stroke="#8C8C8C" stroke-width="0.7"/><rect x="467.6" y="256.1" width="4" height="4" rx="0.2" fill="#fff" stroke="#7A7A7A" stroke-width="0.6"/><rect x="590.8" y="256.1" width="4" height="4" rx="0.2" fill="#fff" stroke="#7A7A7A" stroke-width="0.6"/><rect x="714.0" y="256.1" width="4" height="4" rx="0.2" fill="#fff" stroke="#7A7A7A" stroke-width="0.6"/><rect x="467.6" y="294.0" width="4" height="4" rx="0.2" fill="#fff" stroke="#7A7A7A" stroke-width="0.6"/><rect x="714.0" y="294.0" width="4" height="4" rx="0.2" fill="#fff" stroke="#7A7A7A" stroke-width="0.6"/><rect x="467.6" y="331.9" width="4" height="4" rx="0.2" fill="#fff" stroke="#7A7A7A" stroke-width="0.6"/><rect x="590.8" y="331.9" width="4" height="4" rx="0.2" fill="#fff" stroke="#7A7A7A" stroke-width="0.6"/><rect x="714.0" y="331.9" width="4" height="4" rx="0.2" fill="#fff" stroke="#7A7A7A" stroke-width="0.6"/><circle cx="592.8" cy="247.2" r="2" fill="#fff" stroke="#7A7A7A" stroke-width="0.6"/><circle cx="123.7" cy="500.6" r="1" fill="none" stroke="#666" stroke-width="0.7"/><path d="M120.2 502.6 h7 M123.7 502.6 v1.8 l-2.2 3 M123.7 504.4 l2.2 3 M121.2 503.8 l5.6 4.2" fill="none" stroke="#666" stroke-width="0.7"/><path d="M528.4 502.4 L530.4 499.6 L532.4 502.4 Z" fill="#666"/><path d="M526.8 503.8 h7.2 M526.8 505.6 h7.2 M526.8 507.2 h4.6" stroke="#666" stroke-width="0.7"/><path d="M565.8 500.4 h7.4 v5 h-4.4 l-1.4 1.6 v-1.6 h-1.6z" fill="#555"/><rect x="612.4" y="500" width="7.4" height="7.2" fill="#fff"/><rect x="614" y="501.6" width="4.2" height="2.4" fill="none" stroke="#ABABAB" stroke-width="0.7"/><rect x="631.2" y="500.2" width="3.6" height="3" rx="0.7" fill="#666"/><rect x="636.0" y="500.2" width="3.6" height="3" rx="0.7" fill="#666"/><rect x="631.2" y="504.4" width="3.6" height="3" rx="0.7" fill="#666"/><rect x="636.0" y="504.4" width="3.6" height="3" rx="0.7" fill="#666"/><path d="M651.4 500.2 h8.4 v6.8 h-8.4z M654.2 500.2 v6.8 M657 500.2 v6.8" fill="#E6E6E6" stroke="#666" stroke-width="0.8"/><path d="M671 500.2 h7.8 v4.8 h-7.8z M674.9 505 v1.8 M673 507 h3.8" fill="#E6E6E6" stroke="#666" stroke-width="0.8"/><path d="M688.8 503.7 h5 M756 503.7 h5 M758.5 501.2 v5" stroke="#555" stroke-width="0.9"/><rect x="697.5" y="502.9" width="54.5" height="1.7" rx="0.8" fill="#ABABAB"/><circle cx="725.5" cy="503.7" r="4.3" fill="#fff" stroke="rgba(0,0,0,.15)" stroke-width="0.5"/><rect x="797.2" y="500" width="7.8" height="7.4" fill="none" stroke="#666" stroke-width="0.8"/><path d="M799 501.8 h1.4 v1.4 M803.2 501.8 h-1.4 v1.4 M799 505.6 h1.4 v-1.4 M803.2 505.6 h-1.4 v-1.4" fill="none" stroke="#666" stroke-width="0.6"/></svg>
<span class="t" style='left:31.70px;top:119.15px;font-size:7.50px;line-height:9.00px;color:#555;font-weight:400;font-family:"Liberation Sans","Noto Sans CJK JP",sans-serif;'>2</span>
<span class="t" style='left:31.70px;top:182.90px;font-size:7.50px;line-height:9.00px;color:#555;font-weight:400;font-family:"Liberation Sans","Noto Sans CJK JP",sans-serif;'>3</span>
<span class="t" style='left:31.70px;top:246.00px;font-size:7.50px;line-height:9.00px;color:#555;font-weight:400;font-family:"Liberation Sans","Noto Sans CJK JP",sans-serif;'>4</span>
<span class="t" style='left:31.70px;top:309.60px;font-size:7.50px;line-height:9.00px;color:#555;font-weight:400;font-family:"Liberation Sans","Noto Sans CJK JP",sans-serif;'>5</span>
<span class="t" style='left:31.70px;top:373.40px;font-size:7.50px;line-height:9.00px;color:#555;font-weight:400;font-family:"Liberation Sans","Noto Sans CJK JP",sans-serif;'>6</span>
<span class="t" style='left:31.70px;top:437.20px;font-size:7.50px;line-height:9.00px;color:#555;font-weight:400;font-family:"Liberation Sans","Noto Sans CJK JP",sans-serif;'>7</span>
<span class="t" style='left:50.80px;top:130.60px;font-size:3.00px;line-height:3.60px;color:#666;font-weight:400;font-family:"Liberation Sans","Noto Sans CJK JP",sans-serif;transform:scaleX(0.931);'>文字</span>
<span class="t" style='left:80.00px;top:202.60px;font-size:10.00px;line-height:12.00px;color:#333;font-weight:400;font-family:"Liberation Sans","Noto Sans CJK JP",sans-serif;transform:scaleX(1.050);'>文字</span>
<span class="t" style='left:64.50px;top:268.50px;font-size:6.50px;line-height:7.80px;color:#fff;font-weight:500;font-family:"Liberation Sans","Noto Sans CJK JP",sans-serif;transform:scaleX(1.038);'>文字</span>
<span class="t" style='left:89.00px;top:329.96px;font-size:9.40px;line-height:11.28px;color:#E8772E;font-weight:400;font-family:"Liberation Sans","Noto Sans CJK JP",sans-serif;transform:scaleX(0.968);'>フォント</span>
<span class="t" style='left:54.00px;top:393.56px;font-size:9.40px;line-height:11.28px;color:#111;font-weight:700;font-family:"Liberation Sans","Noto Sans CJK JP",sans-serif;'>文字</span>
<span class="t" style='left:80.60px;top:393.56px;font-size:9.40px;line-height:11.28px;color:#222;font-weight:400;font-family:"Liberation Sans","Noto Sans CJK JP",sans-serif;transform:scaleX(0.927) skewX(-14deg);'>文字</span>
<span class="t" style='left:106.00px;top:393.56px;font-size:9.40px;line-height:11.28px;color:#222;font-weight:400;font-family:"Liberation Sans","Noto Sans CJK JP",sans-serif;transform:scaleX(1.012);'>文字</span>
<span class="t" style='left:81.30px;top:460.72px;font-size:9.80px;line-height:11.76px;color:#222;font-weight:500;font-family:"Liberation Sans","Noto Sans CJK JP",sans-serif;text-shadow:0 0 2px #F5A55A,0 0 3px #F5A55A;'>文字</span>
<span class="t" style='left:156.50px;top:479.30px;font-size:7.00px;line-height:8.40px;color:#222;font-weight:700;font-family:"Liberation Sans","Noto Sans CJK JP",sans-serif;transform:scaleX(0.845);'>ノートを入力</span>
<span class="t" style='left:40.00px;top:500.14px;font-size:6.60px;line-height:7.92px;color:#6E6E6E;font-weight:400;font-family:"Liberation Sans","Noto Sans CJK JP",sans-serif;transform:scaleX(0.950);'>スライド 5 / 7</span>
<span class="t" style='left:90.80px;top:500.14px;font-size:6.60px;line-height:7.92px;color:#6E6E6E;font-weight:400;font-family:"Liberation Sans","Noto Sans CJK JP",sans-serif;transform:scaleX(0.920);'>日本語</span>
<span class="t" style='left:130.00px;top:500.14px;font-size:6.60px;line-height:7.92px;color:#6E6E6E;font-weight:400;font-family:"Liberation Sans","Noto Sans CJK JP",sans-serif;transform:scaleX(0.952);'>アクセシビリティ: 検討が必要です</span>
<span class="t" style='left:537.50px;top:500.26px;font-size:6.40px;line-height:7.68px;color:#6E6E6E;font-weight:400;font-family:"Liberation Sans","Noto Sans CJK JP",sans-serif;transform:scaleX(0.861);'>ノート</span>
<span class="t" style='left:576.00px;top:500.26px;font-size:6.40px;line-height:7.68px;color:#6E6E6E;font-weight:400;font-family:"Liberation Sans","Noto Sans CJK JP",sans-serif;transform:scaleX(0.900);'>コメント</span>
<span class="t" style='left:770.00px;top:499.58px;font-size:7.20px;line-height:8.64px;color:#6E6E6E;font-weight:400;font-family:"Liberation Sans","Noto Sans CJK JP",sans-serif;transform:scaleX(0.907);'>112%</span>
<span class="t" style='left:77.30px;top:35.84px;font-size:5.60px;line-height:6.72px;color:#fff;font-weight:700;font-family:"Liberation Sans","Noto Sans CJK JP",sans-serif;transform:scaleX(0.956);'>自動保存</span>
<span class="t" style='left:111.20px;top:36.78px;font-size:4.20px;line-height:5.04px;color:rgba(255,255,255,.8);font-weight:500;font-family:"Liberation Sans","Noto Sans CJK JP",sans-serif;'>オフ</span>
<span class="t" style='left:225.70px;top:33.98px;font-size:9.20px;line-height:11.04px;color:rgba(255,255,255,.95);font-weight:400;font-family:"Liberation Sans","Noto Sans CJK JP",sans-serif;transform:scaleX(0.948);'>ab</span>
<span class="t" style='left:702.00px;top:34.74px;font-size:7.60px;line-height:9.12px;color:#fff;font-weight:700;font-family:"Liberation Sans","Noto Sans CJK JP",sans-serif;transform:scaleX(0.865);'>プレゼンテーション 2</span>
<span class="t" style='left:32.20px;top:52.18px;font-size:7.20px;line-height:8.64px;color:#111;font-weight:700;font-family:"Liberation Sans","Noto Sans CJK JP",sans-serif;transform:scaleX(0.927);'>ホーム</span>
<span class="t" style='left:65.00px;top:52.18px;font-size:7.20px;line-height:8.64px;color:#222;font-weight:500;font-family:"Liberation Sans","Noto Sans CJK JP",sans-serif;transform:scaleX(0.848);'>挿入</span>
<span class="t" style='left:91.00px;top:52.18px;font-size:7.20px;line-height:8.64px;color:#222;font-weight:500;font-family:"Liberation Sans","Noto Sans CJK JP",sans-serif;transform:scaleX(0.869);'>描画</span>
<span class="t" style='left:117.00px;top:52.18px;font-size:7.20px;line-height:8.64px;color:#222;font-weight:500;font-family:"Liberation Sans","Noto Sans CJK JP",sans-serif;transform:scaleX(0.904);'>デザイン</span>
<span class="t" style='left:156.60px;top:52.18px;font-size:7.20px;line-height:8.64px;color:#222;font-weight:500;font-family:"Liberation Sans","Noto Sans CJK JP",sans-serif;transform:scaleX(0.879);'>画面切り替え</span>
<span class="t" style='left:208.00px;top:52.18px;font-size:7.20px;line-height:8.64px;color:#222;font-weight:500;font-family:"Liberation Sans","Noto Sans CJK JP",sans-serif;transform:scaleX(0.905);'>アニメーション</span>
<span class="t" style='left:267.00px;top:52.18px;font-size:7.20px;line-height:8.64px;color:#222;font-weight:500;font-family:"Liberation Sans","Noto Sans CJK JP",sans-serif;transform:scaleX(0.898);'>スライド ショー</span>
<span class="t" style='left:327.50px;top:52.18px;font-size:7.20px;line-height:8.64px;color:#222;font-weight:500;font-family:"Liberation Sans","Noto Sans CJK JP",sans-serif;transform:scaleX(0.869);'>校閲</span>
<span class="t" style='left:353.00px;top:52.18px;font-size:7.20px;line-height:8.64px;color:#222;font-weight:500;font-family:"Liberation Sans","Noto Sans CJK JP",sans-serif;transform:scaleX(0.924);'>表示</span>
<span class="t" style='left:379.00px;top:52.18px;font-size:7.20px;line-height:8.64px;color:#C73E1C;font-weight:500;font-family:"Liberation Sans","Noto Sans CJK JP",sans-serif;transform:scaleX(0.914);'>図形の書式設定</span>
<span class="t" style='left:446.00px;top:52.18px;font-size:7.20px;line-height:8.64px;color:#222;font-weight:500;font-family:"Liberation Sans","Noto Sans CJK JP",sans-serif;transform:scaleX(0.887);'>操作アシスト</span>
<span class="t" style='left:749.50px;top:52.76px;font-size:6.40px;line-height:7.68px;color:#B93B1A;font-weight:700;font-family:"Liberation Sans","Noto Sans CJK JP",sans-serif;transform:scaleX(0.837);'>共有</span>
<span class="t" style='left:785.00px;top:52.76px;font-size:6.40px;line-height:7.68px;color:#B93B1A;font-weight:700;font-family:"Liberation Sans","Noto Sans CJK JP",sans-serif;transform:scaleX(0.900);'>コメント</span>
<span class="t" style='left:34.00px;top:88.30px;font-size:6.00px;line-height:7.20px;color:#2A2A2A;font-weight:500;font-family:"Liberation Sans","Noto Sans CJK JP",sans-serif;transform:scaleX(0.873);'>ペースト</span>
<span class="t" style='left:72.70px;top:69.00px;font-size:6.00px;line-height:7.20px;color:#2A2A2A;font-weight:500;font-family:"Liberation Sans","Noto Sans CJK JP",sans-serif;transform:scaleX(0.838);'>カット</span>
<span class="t" style='left:73.20px;top:80.90px;font-size:6.00px;line-height:7.20px;color:#2A2A2A;font-weight:500;font-family:"Liberation Sans","Noto Sans CJK JP",sans-serif;transform:scaleX(0.855);'>コピー</span>
<span class="t" style='left:73.00px;top:93.00px;font-size:6.00px;line-height:7.20px;color:#2A2A2A;font-weight:500;font-family:"Liberation Sans","Noto Sans CJK JP",sans-serif;transform:scaleX(0.866);'>書式</span>
<span class="t" style='left:113.50px;top:88.30px;font-size:6.00px;line-height:7.20px;color:#2A2A2A;font-weight:500;font-family:"Liberation Sans","Noto Sans CJK JP",sans-serif;transform:scaleX(0.833);'>新しい</span>
<span class="t" style='left:111.30px;top:94.40px;font-size:6.00px;line-height:7.20px;color:#2A2A2A;font-weight:500;font-family:"Liberation Sans","Noto Sans CJK JP",sans-serif;transform:scaleX(0.849);'>スライド</span>
<span class="t" style='left:150.80px;top:68.80px;font-size:6.00px;line-height:7.20px;color:#2A2A2A;font-weight:500;font-family:"Liberation Sans","Noto Sans CJK JP",sans-serif;transform:scaleX(0.833);'>レイアウト</span>
<span class="t" style='left:150.80px;top:80.80px;font-size:6.00px;line-height:7.20px;color:#2A2A2A;font-weight:500;font-family:"Liberation Sans","Noto Sans CJK JP",sans-serif;transform:scaleX(0.799);'>リセット</span>
<span class="t" style='left:150.80px;top:92.90px;font-size:6.00px;line-height:7.20px;color:#2A2A2A;font-weight:500;font-family:"Liberation Sans","Noto Sans CJK JP",sans-serif;transform:scaleX(0.833);'>セクション</span>
<span class="t" style='left:523.00px;top:88.30px;font-size:6.00px;line-height:7.20px;color:#2A2A2A;font-weight:700;font-family:"Liberation Sans","Noto Sans CJK JP",sans-serif;transform:scaleX(0.934);'>SmartArt</span>
<span class="t" style='left:528.00px;top:94.40px;font-size:6.00px;line-height:7.20px;color:#2A2A2A;font-weight:500;font-family:"Liberation Sans","Noto Sans CJK JP",sans-serif;transform:scaleX(0.805);'>に変換</span>
<span class="t" style='left:568.00px;top:88.30px;font-size:6.00px;line-height:7.20px;color:#2A2A2A;font-weight:500;font-family:"Liberation Sans","Noto Sans CJK JP",sans-serif;transform:scaleX(0.832);'>画像</span>
<span class="t" style='left:596.30px;top:88.30px;font-size:6.00px;line-height:7.20px;color:#2A2A2A;font-weight:500;font-family:"Liberation Sans","Noto Sans CJK JP",sans-serif;transform:scaleX(0.807);'>図形</span>
<span class="t" style='left:618.00px;top:88.30px;font-size:6.00px;line-height:7.20px;color:#2A2A2A;font-weight:500;font-family:"Liberation Sans","Noto Sans CJK JP",sans-serif;transform:scaleX(0.852);'>テキスト</span>
<span class="t" style='left:618.00px;top:94.40px;font-size:6.00px;line-height:7.20px;color:#2A2A2A;font-weight:500;font-family:"Liberation Sans","Noto Sans CJK JP",sans-serif;transform:scaleX(0.852);'>ボックス</span>
<span class="t" style='left:661.00px;top:88.30px;font-size:6.00px;line-height:7.20px;color:#2A2A2A;font-weight:500;font-family:"Liberation Sans","Noto Sans CJK JP",sans-serif;transform:scaleX(0.832);'>整列</span>
<span class="t" style='left:683.70px;top:88.30px;font-size:6.00px;line-height:7.20px;color:#2A2A2A;font-weight:500;font-family:"Liberation Sans","Noto Sans CJK JP",sans-serif;transform:scaleX(0.833);'>クイック</span>
<span class="t" style='left:683.70px;top:94.40px;font-size:6.00px;line-height:7.20px;color:#2A2A2A;font-weight:500;font-family:"Liberation Sans","Noto Sans CJK JP",sans-serif;transform:scaleX(0.833);'>スタイル</span>
<span class="t" style='left:723.00px;top:72.50px;font-size:6.00px;line-height:7.20px;color:#2A2A2A;font-weight:500;font-family:"Liberation Sans","Noto Sans CJK JP",sans-serif;transform:scaleX(0.895);'>図形の塗りつぶし</span>
<span class="t" style='left:723.00px;top:89.50px;font-size:6.00px;line-height:7.20px;color:#2A2A2A;font-weight:500;font-family:"Liberation Sans","Noto Sans CJK JP",sans-serif;transform:scaleX(0.883);'>図形の枠線</span>
<span class="t" style='left:786.00px;top:88.30px;font-size:6.00px;line-height:7.20px;color:#2A2A2A;font-weight:500;font-family:"Liberation Sans","Noto Sans CJK JP",sans-serif;transform:scaleX(0.866);'>デザイン</span>
<span class="t" style='left:786.00px;top:94.50px;font-size:6.00px;line-height:7.20px;color:#2A2A2A;font-weight:500;font-family:"Liberation Sans","Noto Sans CJK JP",sans-serif;transform:scaleX(0.878);'>アイデア</span>
<span class="t" style='left:199.70px;top:72.12px;font-size:6.30px;line-height:7.56px;color:#111;font-weight:500;font-family:"Liberation Sans","Noto Sans CJK JP",sans-serif;transform:scaleX(1.013);'>游ゴシック Regular (本文)</span>
<span class="t" style='left:295.80px;top:71.16px;font-size:7.40px;line-height:8.88px;color:#111;font-weight:500;font-family:"Liberation Sans","Noto Sans CJK JP",sans-serif;transform:scaleX(0.947);'>96</span>
<span class="t" style='left:454.05px;top:105.08px;font-size:5.20px;line-height:6.24px;color:#808080;font-weight:400;font-family:"Liberation Sans","Noto Sans CJK JP",sans-serif;'>1</span>
<span class="t" style='left:436.60px;top:105.08px;font-size:5.20px;line-height:6.24px;color:#808080;font-weight:400;font-family:"Liberation Sans","Noto Sans CJK JP",sans-serif;'>2</span>
<span class="t" style='left:419.15px;top:105.08px;font-size:5.20px;line-height:6.24px;color:#808080;font-weight:400;font-family:"Liberation Sans","Noto Sans CJK JP",sans-serif;'>3</span>
<span class="t" style='left:401.70px;top:105.08px;font-size:5.20px;line-height:6.24px;color:#808080;font-weight:400;font-family:"Liberation Sans","Noto Sans CJK JP",sans-serif;'>4</span>
<span class="t" style='left:488.95px;top:105.08px;font-size:5.20px;line-height:6.24px;color:#808080;font-weight:400;font-family:"Liberation Sans","Noto Sans CJK JP",sans-serif;'>1</span>
<span class="t" style='left:506.40px;top:105.08px;font-size:5.20px;line-height:6.24px;color:#808080;font-weight:400;font-family:"Liberation Sans","Noto Sans CJK JP",sans-serif;'>2</span>
<span class="t" style='left:523.85px;top:105.08px;font-size:5.20px;line-height:6.24px;color:#808080;font-weight:400;font-family:"Liberation Sans","Noto Sans CJK JP",sans-serif;'>3</span>
<span class="t" style='left:541.30px;top:105.08px;font-size:5.20px;line-height:6.24px;color:#808080;font-weight:400;font-family:"Liberation Sans","Noto Sans CJK JP",sans-serif;'>4</span>
<span class="t" style='left:558.75px;top:105.08px;font-size:5.20px;line-height:6.24px;color:#808080;font-weight:400;font-family:"Liberation Sans","Noto Sans CJK JP",sans-serif;'>5</span>
<span class="t" style='left:576.20px;top:105.08px;font-size:5.20px;line-height:6.24px;color:#808080;font-weight:400;font-family:"Liberation Sans","Noto Sans CJK JP",sans-serif;'>6</span>
<span class="t" style='left:593.65px;top:105.08px;font-size:5.20px;line-height:6.24px;color:#808080;font-weight:400;font-family:"Liberation Sans","Noto Sans CJK JP",sans-serif;'>7</span>
<span class="t" style='left:611.10px;top:105.08px;font-size:5.20px;line-height:6.24px;color:#808080;font-weight:400;font-family:"Liberation Sans","Noto Sans CJK JP",sans-serif;'>8</span>
<span class="t" style='left:628.55px;top:105.08px;font-size:5.20px;line-height:6.24px;color:#808080;font-weight:400;font-family:"Liberation Sans","Noto Sans CJK JP",sans-serif;'>9</span>
<span class="t" style='left:644.60px;top:105.08px;font-size:5.20px;line-height:6.24px;color:#808080;font-weight:400;font-family:"Liberation Sans","Noto Sans CJK JP",sans-serif;'>10</span>
<span class="t" style='left:662.05px;top:105.08px;font-size:5.20px;line-height:6.24px;color:#808080;font-weight:400;font-family:"Liberation Sans","Noto Sans CJK JP",sans-serif;'>11</span>
<span class="t" style='left:679.50px;top:105.08px;font-size:5.20px;line-height:6.24px;color:#808080;font-weight:400;font-family:"Liberation Sans","Noto Sans CJK JP",sans-serif;'>12</span>
<span class="t" style='left:696.95px;top:105.08px;font-size:5.20px;line-height:6.24px;color:#808080;font-weight:400;font-family:"Liberation Sans","Noto Sans CJK JP",sans-serif;'>13</span>
<span class="t" style='left:714.40px;top:105.08px;font-size:5.20px;line-height:6.24px;color:#808080;font-weight:400;font-family:"Liberation Sans","Noto Sans CJK JP",sans-serif;'>14</span>
<span class="t" style='left:731.85px;top:105.08px;font-size:5.20px;line-height:6.24px;color:#808080;font-weight:400;font-family:"Liberation Sans","Noto Sans CJK JP",sans-serif;'>15</span>
<span class="t" style='left:749.30px;top:105.08px;font-size:5.20px;line-height:6.24px;color:#808080;font-weight:400;font-family:"Liberation Sans","Noto Sans CJK JP",sans-serif;'>16</span>
<span class="t" style='left:766.75px;top:105.08px;font-size:5.20px;line-height:6.24px;color:#808080;font-weight:400;font-family:"Liberation Sans","Noto Sans CJK JP",sans-serif;'>17</span>
<span class="t" style='left:154.00px;top:239.55px;font-size:5.00px;line-height:6.00px;color:#808080;font-weight:400;font-family:"Liberation Sans","Noto Sans CJK JP",sans-serif;transform:rotate(-90deg);transform-origin:50% 50%;'>1</span>
<span class="t" style='left:154.00px;top:222.10px;font-size:5.00px;line-height:6.00px;color:#808080;font-weight:400;font-family:"Liberation Sans","Noto Sans CJK JP",sans-serif;transform:rotate(-90deg);transform-origin:50% 50%;'>2</span>
<span class="t" style='left:154.00px;top:204.65px;font-size:5.00px;line-height:6.00px;color:#808080;font-weight:400;font-family:"Liberation Sans","Noto Sans CJK JP",sans-serif;transform:rotate(-90deg);transform-origin:50% 50%;'>3</span>
<span class="t" style='left:154.00px;top:187.20px;font-size:5.00px;line-height:6.00px;color:#808080;font-weight:400;font-family:"Liberation Sans","Noto Sans CJK JP",sans-serif;transform:rotate(-90deg);transform-origin:50% 50%;'>4</span>
<span class="t" style='left:154.00px;top:169.75px;font-size:5.00px;line-height:6.00px;color:#808080;font-weight:400;font-family:"Liberation Sans","Noto Sans CJK JP",sans-serif;transform:rotate(-90deg);transform-origin:50% 50%;'>5</span>
<span class="t" style='left:154.00px;top:152.30px;font-size:5.00px;line-height:6.00px;color:#808080;font-weight:400;font-family:"Liberation Sans","Noto Sans CJK JP",sans-serif;transform:rotate(-90deg);transform-origin:50% 50%;'>6</span>
<span class="t" style='left:154.00px;top:134.85px;font-size:5.00px;line-height:6.00px;color:#808080;font-weight:400;font-family:"Liberation Sans","Noto Sans CJK JP",sans-serif;transform:rotate(-90deg);transform-origin:50% 50%;'>7</span>
<span class="t" style='left:154.00px;top:274.45px;font-size:5.00px;line-height:6.00px;color:#808080;font-weight:400;font-family:"Liberation Sans","Noto Sans CJK JP",sans-serif;transform:rotate(-90deg);transform-origin:50% 50%;'>1</span>
<span class="t" style='left:154.00px;top:291.90px;font-size:5.00px;line-height:6.00px;color:#808080;font-weight:400;font-family:"Liberation Sans","Noto Sans CJK JP",sans-serif;transform:rotate(-90deg);transform-origin:50% 50%;'>2</span>
<span class="t" style='left:154.00px;top:309.35px;font-size:5.00px;line-height:6.00px;color:#808080;font-weight:400;font-family:"Liberation Sans","Noto Sans CJK JP",sans-serif;transform:rotate(-90deg);transform-origin:50% 50%;'>3</span>
<span class="t" style='left:154.00px;top:326.80px;font-size:5.00px;line-height:6.00px;color:#808080;font-weight:400;font-family:"Liberation Sans","Noto Sans CJK JP",sans-serif;transform:rotate(-90deg);transform-origin:50% 50%;'>4</span>
<span class="t" style='left:154.00px;top:344.25px;font-size:5.00px;line-height:6.00px;color:#808080;font-weight:400;font-family:"Liberation Sans","Noto Sans CJK JP",sans-serif;transform:rotate(-90deg);transform-origin:50% 50%;'>5</span>
<span class="t" style='left:154.00px;top:361.70px;font-size:5.00px;line-height:6.00px;color:#808080;font-weight:400;font-family:"Liberation Sans","Noto Sans CJK JP",sans-serif;transform:rotate(-90deg);transform-origin:50% 50%;'>6</span>
<span class="t" style='left:154.00px;top:379.15px;font-size:5.00px;line-height:6.00px;color:#808080;font-weight:400;font-family:"Liberation Sans","Noto Sans CJK JP",sans-serif;transform:rotate(-90deg);transform-origin:50% 50%;'>7</span>
<span class="t" style='left:154.00px;top:396.60px;font-size:5.00px;line-height:6.00px;color:#808080;font-weight:400;font-family:"Liberation Sans","Noto Sans CJK JP",sans-serif;transform:rotate(-90deg);transform-origin:50% 50%;'>8</span>
<span class="t" style='left:154.00px;top:414.05px;font-size:5.00px;line-height:6.00px;color:#808080;font-weight:400;font-family:"Liberation Sans","Noto Sans CJK JP",sans-serif;transform:rotate(-90deg);transform-origin:50% 50%;'>9</span>
<span class="t" style='left:152.60px;top:431.50px;font-size:5.00px;line-height:6.00px;color:#808080;font-weight:400;font-family:"Liberation Sans","Noto Sans CJK JP",sans-serif;transform:rotate(-90deg);transform-origin:50% 50%;'>10</span>
<span class="t" style='left:152.60px;top:448.95px;font-size:5.00px;line-height:6.00px;color:#808080;font-weight:400;font-family:"Liberation Sans","Noto Sans CJK JP",sans-serif;transform:rotate(-90deg);transform-origin:50% 50%;'>11</span>
<span class="t" style='left:474.80px;top:256.30px;font-size:57.50px;line-height:69.00px;color:#E87A2F;font-weight:300;font-family:"Noto Sans CJK JP",sans-serif;letter-spacing:1.5px;-webkit-text-stroke:0.45px #E87A2F;'>フォント</span>
<div class="a" style="left:196.70px;top:81.00px;width:192.30px;height:425.50px;background:#E7EBEB;border-radius:4.5px;box-shadow:0 1px 6px rgba(0,0,0,.35),0 0 0 0.5px rgba(0,0,0,.12);"></div>
<div class="a" style="left:205.00px;top:98.00px;width:176.50px;height:0.60px;background:#DADEDE;"></div>
<div class="a" style="left:205.00px;top:180.30px;width:176.50px;height:0.60px;background:#D5D9D9;"></div>
<div class="a" style="left:205.00px;top:278.00px;width:176.50px;height:0.60px;background:#D5D9D9;"></div>
<svg width="960" height="540" viewBox="0 0 960 540" fill="none" stroke="#222" stroke-width="1.1" stroke-linecap="round" stroke-linejoin="round"><path d="M378 88.0 l2.3 2.3 l-2.3 2.3" /><path d="M378 201.5 l2.3 2.3 l-2.3 2.3" /><path d="M378 216.7 l2.3 2.3 l-2.3 2.3" /><path d="M378 232.5 l2.3 2.3 l-2.3 2.3" /><path d="M378 248.9 l2.3 2.3 l-2.3 2.3" /><path d="M378 264.7 l2.3 2.3 l-2.3 2.3" /><path d="M378 457.6 l2.3 2.3 l-2.3 2.3" /><path d="M290.3 499 l2.5 2.3 l2.5 -2.3" /></svg>
<span class="t" style='left:205.30px;top:86.48px;font-size:7.20px;line-height:8.64px;color:#1E1E1E;font-weight:400;font-family:"Liberation Sans","Noto Sans CJK JP",sans-serif;transform:scaleX(0.903);'>フォント コレクション</span>
<span class="t" style='left:205.00px;top:104.96px;font-size:6.40px;line-height:7.68px;color:#ABB0B0;font-weight:400;font-family:"Liberation Sans","Noto Sans CJK JP",sans-serif;transform:scaleX(1.017);'>テーマのフォント</span>
<span class="t" style='left:217.00px;top:117.02px;font-size:8.30px;line-height:9.96px;color:#333;font-weight:300;font-family:"Liberation Sans","Noto Sans CJK JP",sans-serif;transform:scaleX(0.922);'>游ゴシック Light</span>
<span class="t" style='left:343.80px;top:122.10px;font-size:5.00px;line-height:6.00px;color:#333;font-weight:500;font-family:"Liberation Sans","Noto Sans CJK JP",sans-serif;transform:scaleX(1.057);'>[見出し]</span>
<span class="t" style='left:217.00px;top:133.12px;font-size:8.30px;line-height:9.96px;color:#333;font-weight:400;font-family:"Liberation Sans","Noto Sans CJK JP",sans-serif;transform:scaleX(0.925);'>游ゴシック Regular</span>
<span class="t" style='left:343.80px;top:138.20px;font-size:5.00px;line-height:6.00px;color:#333;font-weight:500;font-family:"Liberation Sans","Noto Sans CJK JP",sans-serif;transform:scaleX(1.056);'>[本文]</span>
<span class="t" style='left:217.00px;top:148.82px;font-size:8.30px;line-height:9.96px;color:#333;font-weight:300;font-family:"Liberation Sans","Noto Sans CJK JP",sans-serif;transform:scaleX(0.922);'>游ゴシック Light</span>
<span class="t" style='left:343.80px;top:153.90px;font-size:5.00px;line-height:6.00px;color:#333;font-weight:500;font-family:"Liberation Sans","Noto Sans CJK JP",sans-serif;transform:scaleX(1.057);'>[見出し]</span>
<span class="t" style='left:217.00px;top:164.52px;font-size:8.30px;line-height:9.96px;color:#333;font-weight:400;font-family:"Liberation Sans","Noto Sans CJK JP",sans-serif;transform:scaleX(0.925);'>游ゴシック Regular</span>
<span class="t" style='left:343.80px;top:169.60px;font-size:5.00px;line-height:6.00px;color:#333;font-weight:500;font-family:"Liberation Sans","Noto Sans CJK JP",sans-serif;transform:scaleX(1.056);'>[本文]</span>
<span class="t" style='left:205.00px;top:186.46px;font-size:6.40px;line-height:7.68px;color:#ABB0B0;font-weight:400;font-family:"Liberation Sans","Noto Sans CJK JP",sans-serif;transform:scaleX(1.017);'>最近使ったフォント</span>
<span class="t" style='left:217.00px;top:198.16px;font-size:8.40px;line-height:10.08px;color:#1E1E1E;font-weight:400;font-family:"Liberation Sans","Noto Sans CJK JP",sans-serif;transform:scaleX(1.041);'>Meiryo UI</span>
<span class="t" style='left:217.00px;top:214.82px;font-size:7.80px;line-height:9.36px;color:#222;font-weight:500;font-family:"Liberation Serif","Noto Serif CJK JP",serif;transform:scaleX(0.983);'>游明朝</span>
<span class="t" style='left:217.00px;top:230.32px;font-size:8.30px;line-height:9.96px;color:#333;font-weight:400;font-family:"Liberation Sans","Noto Sans CJK JP",sans-serif;transform:scaleX(0.906);'>游ゴシック</span>
<span class="t" style='left:217.00px;top:246.76px;font-size:7.40px;line-height:8.88px;color:#111;font-weight:700;font-family:"Liberation Sans","Noto Sans CJK JP",sans-serif;transform:scaleX(0.935);'>Futura</span>
<span class="t" style='left:217.00px;top:261.74px;font-size:8.60px;line-height:10.32px;color:#222;font-weight:400;font-family:"Liberation Sans","Noto Sans CJK JP",sans-serif;transform:scaleX(1.034);'>Century Gothic</span>
<span class="t" style='left:205.00px;top:284.36px;font-size:6.40px;line-height:7.68px;color:#ABB0B0;font-weight:400;font-family:"Liberation Sans","Noto Sans CJK JP",sans-serif;transform:scaleX(1.031);'>すべてのフォント</span>
<span class="t" style='left:217.00px;top:296.42px;font-size:8.30px;line-height:9.96px;color:#111;font-weight:700;font-family:"Liberation Sans","Noto Sans CJK JP",sans-serif;transform:scaleX(0.802);'>HGPｺﾞｼｯｸE</span>
<span class="t" style='left:217.00px;top:312.42px;font-size:8.30px;line-height:9.96px;color:#000;font-weight:900;font-family:"Liberation Sans","Noto Sans CJK JP",sans-serif;transform:scaleX(0.860);'>HGP創英角ｺﾞｼｯｸUB</span>
<span class="t" style='left:217.00px;top:328.12px;font-size:8.30px;line-height:9.96px;color:#222;font-weight:700;font-family:"Liberation Serif","Noto Serif CJK JP",serif;transform:scaleX(0.898);'>HGP明朝E</span>
<span class="t" style='left:217.00px;top:344.02px;font-size:8.30px;line-height:9.96px;color:#111;font-weight:700;font-family:"Liberation Sans","Noto Sans CJK JP",sans-serif;transform:scaleX(0.791);'>HGSｺﾞｼｯｸE</span>
<span class="t" style='left:217.00px;top:360.12px;font-size:8.30px;line-height:9.96px;color:#000;font-weight:900;font-family:"Liberation Sans","Noto Sans CJK JP",sans-serif;transform:scaleX(0.860);'>HGS創英角ｺﾞｼｯｸUB</span>
<span class="t" style='left:217.00px;top:375.82px;font-size:8.30px;line-height:9.96px;color:#222;font-weight:700;font-family:"Liberation Serif","Noto Serif CJK JP",serif;transform:scaleX(0.898);'>HGS明朝E</span>
<span class="t" style='left:217.00px;top:391.62px;font-size:8.30px;line-height:9.96px;color:#111;font-weight:700;font-family:"Liberation Sans","Noto Sans CJK JP",sans-serif;transform:scaleX(0.756);'>HGｺﾞｼｯｸE</span>
<span class="t" style='left:217.00px;top:407.72px;font-size:8.30px;line-height:9.96px;color:#111;font-weight:300;font-family:"Liberation Sans","Noto Sans CJK JP",sans-serif;transform:scaleX(0.984);'>HG丸ｺﾞｼｯｸM-PRO</span>
<span class="t" style='left:217.00px;top:423.72px;font-size:8.30px;line-height:9.96px;color:#000;font-weight:900;font-family:"Liberation Sans","Noto Sans CJK JP",sans-serif;transform:scaleX(0.789);'>HG創英角ｺﾞｼｯｸUB</span>
<span class="t" style='left:217.00px;top:439.52px;font-size:8.30px;line-height:9.96px;color:#333;font-weight:700;font-family:"Liberation Serif","Noto Serif CJK JP",serif;transform:scaleX(0.799);'>HG明朝E</span>
<span class="t" style='left:217.00px;top:454.72px;font-size:8.30px;line-height:9.96px;color:#1E1E1E;font-weight:400;font-family:"Liberation Sans","Noto Sans CJK JP",sans-serif;transform:scaleX(1.051);'>Meiryo UI</span>
<span class="t" style='left:217.00px;top:471.02px;font-size:8.30px;line-height:9.96px;color:#111;font-weight:700;font-family:"Liberation Sans","Noto Sans CJK JP",sans-serif;transform:scaleX(0.954);'>MS Pゴシック</span>
<span class="t" style='left:217.00px;top:486.52px;font-size:8.30px;line-height:9.96px;color:#222;font-weight:500;font-family:"Liberation Serif","Noto Serif CJK JP",serif;transform:scaleX(1.120);'>MS P明朝</span>
<svg width="960" height="540" viewBox="0 0 960 540">
<rect x="190.25" y="62.95" width="208" height="447.2" rx="8" fill="none" stroke="#E87C33" stroke-width="4.1"/>
<rect x="461" y="251" width="279.3" height="91.9" rx="2.6" fill="none" stroke="#E87C33" stroke-width="3.8"/>
<path d="M465.4 200 V40.9 H434" fill="none" stroke="#E87C33" stroke-width="3.4"/>
<path d="M421.7 40.3 L436.2 33.4 V47 Z" fill="#E87C33"/>
<circle cx="400" cy="43.5" r="17.6" fill="#E87C33"/>
<circle cx="465" cy="225.1" r="17.7" fill="#E87C33"/>
</svg>
<div class="a" style="left:830px;top:22.6px;width:104px;height:0;border-top:1px dashed #E6E6E6;"></div>
<span class="t" style='left:392.70px;top:31.68px;font-size:19.20px;line-height:23.04px;color:#fff;font-weight:700;font-family:"Noto Sans CJK JP",sans-serif;transform:scaleX(1.148);'>2</span>
<span class="t" style='left:459.30px;top:212.90px;font-size:19.00px;line-height:22.80px;color:#fff;font-weight:700;font-family:"Noto Sans CJK JP",sans-serif;'>1</span>
<span class="t" style='left:842.90px;top:29.62px;font-size:21.30px;line-height:25.56px;color:#EB7C30;font-weight:900;font-family:"Noto Sans CJK JP",sans-serif;transform:scaleX(0.762);-webkit-text-stroke:0.7px #EB7C30;'>シースラ</span>
<span class="t" style='left:909.30px;top:29.52px;font-size:21.30px;line-height:25.56px;color:#EB7C30;font-weight:900;font-family:"Noto Sans CJK JP",sans-serif;transform:scaleX(1.046);-webkit-text-stroke:0.7px #EB7C30;'>!!</span>
</body></html>
